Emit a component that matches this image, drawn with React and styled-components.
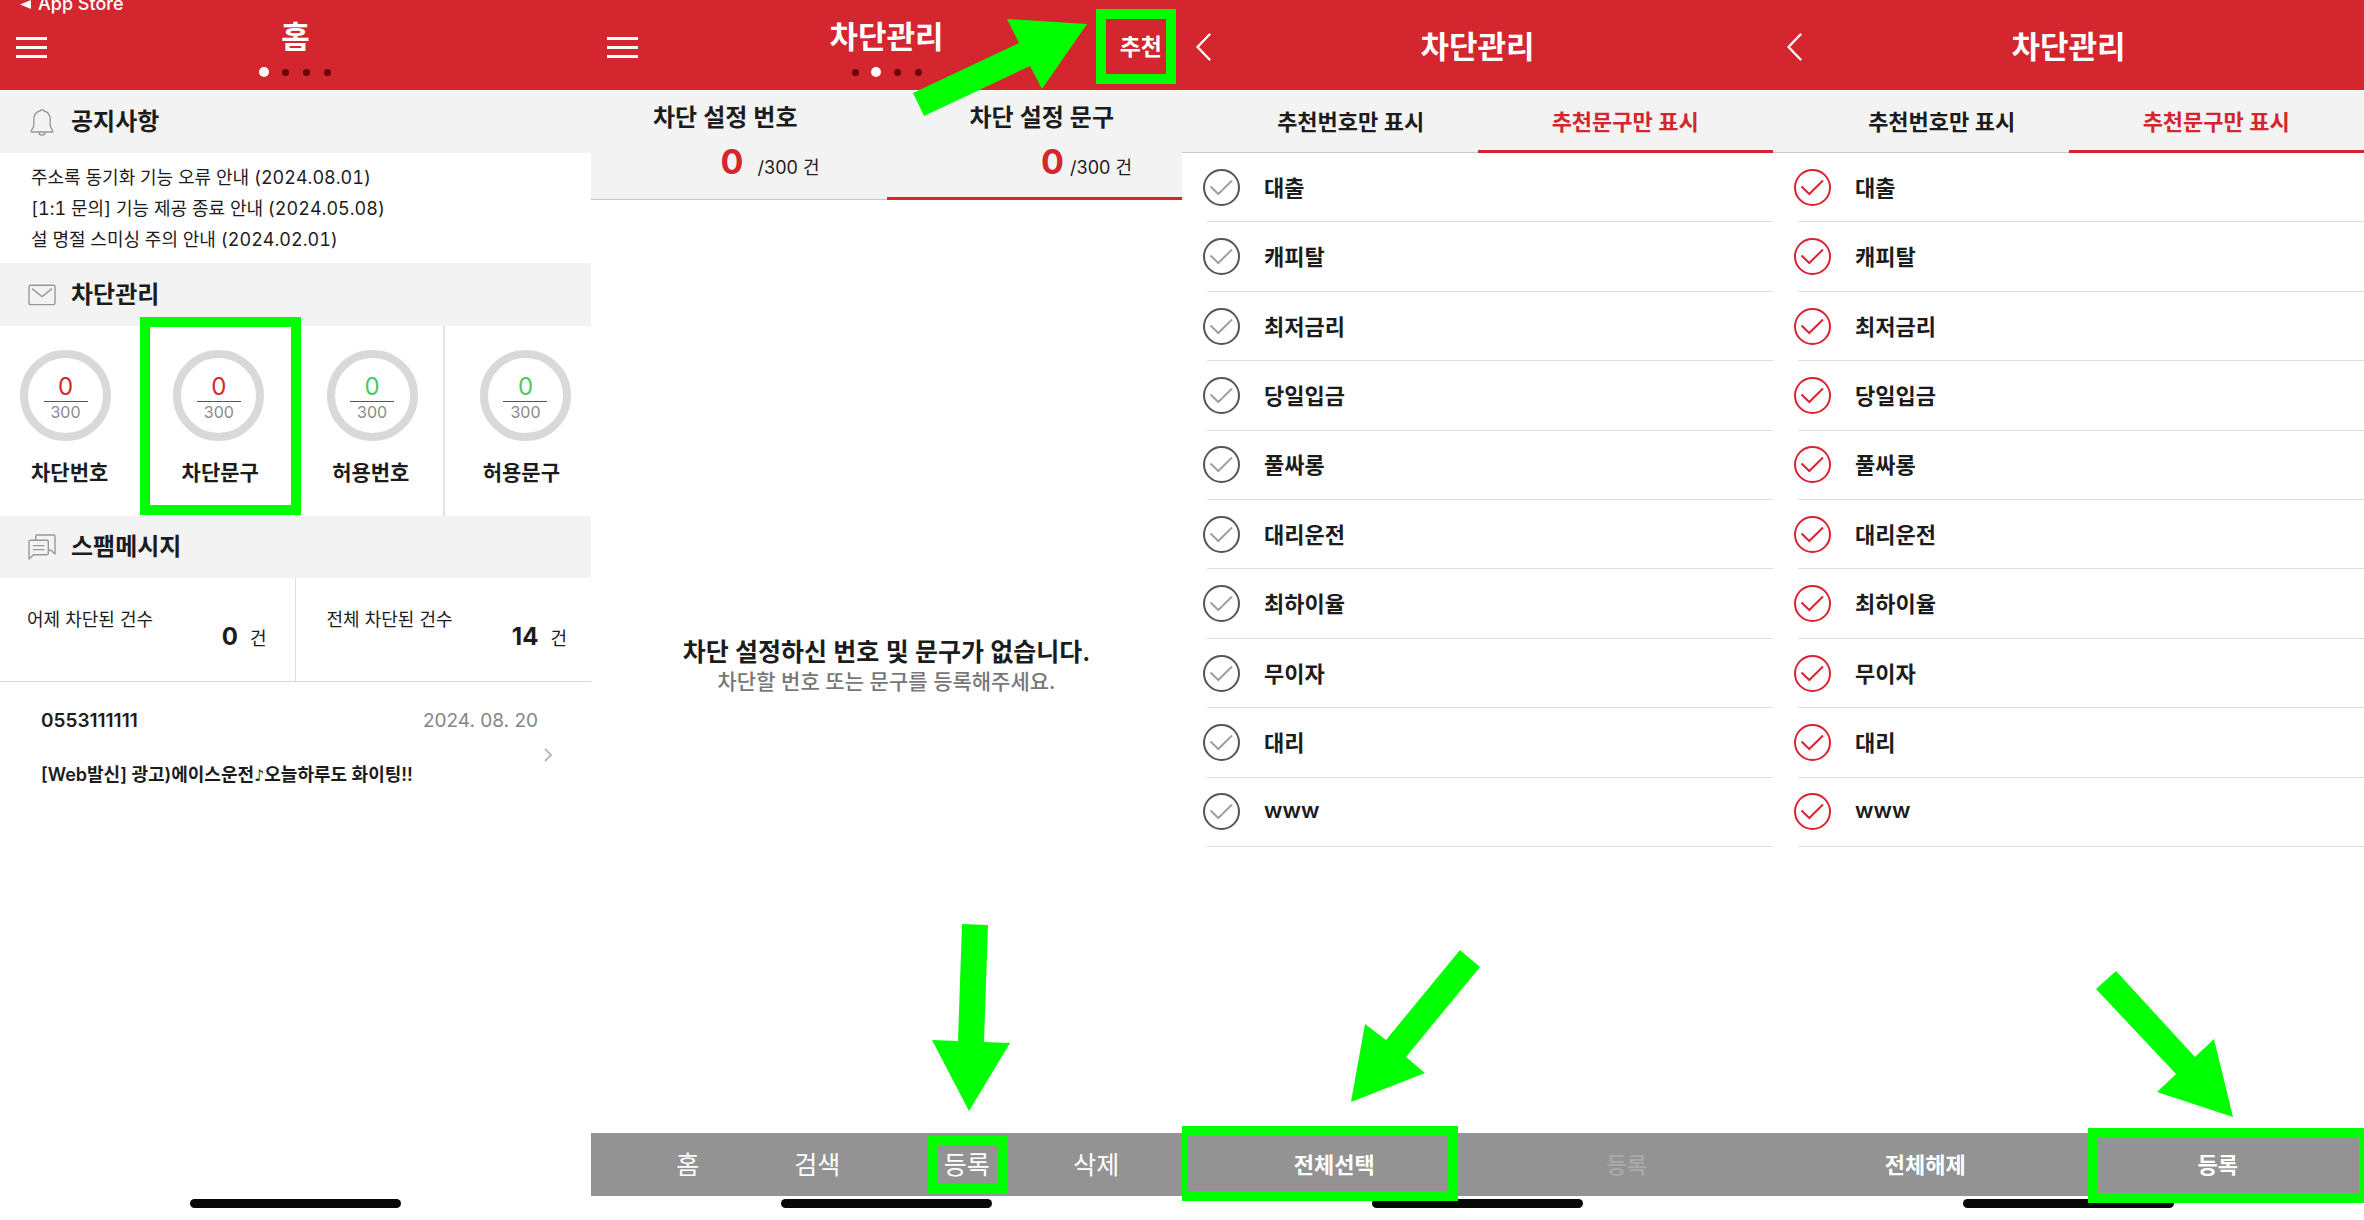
import React, { useState } from 'react';
import styled, { createGlobalStyle } from 'styled-components';

const GlobalStyle = createGlobalStyle`
    * {
        box-sizing: border-box;
    }

    body {
        margin: 0;
        background-color: #fff;
        color: #1c1c1c;
        font-family: Inter, "Noto Sans CJK KR", sans-serif;
        font-size: 18px;
    }

    h1, h2, p, ul {
        margin: 0;
        padding: 0;
    }

    ul {
        list-style: none;
    }

    a {
        color: inherit;
        text-decoration: none;
    }

    button {
        padding: 0;
        border: none;
        background: none;
        color: inherit;
        font: inherit;
        cursor: pointer;
    }
`;

// Screens
const Screens = styled.main`
    display: grid;
    grid-template-columns: repeat(4, 1fr);
    min-height: 100vh;
`;

const Screen = styled.section`
    position: relative;
    display: flex;
    flex-direction: column;
    min-width: 0;
    overflow: hidden;
`;

const Body = styled.div`
    flex: 1;
`;

// Header
const HeaderContainer = styled.header`
    display: flex;
    flex-direction: column;
    height: 91px;
    background-color: #d3262f;
    border-bottom: 1px solid #fafafa;
    color: #fff;
`;

const StatusBar = styled.div`
    display: flex;
    align-items: flex-end;
    gap: 7px;
    height: 14px;
    padding-left: 20px;
    overflow: hidden;
    font-weight: 500;
    line-height: 20px;

    svg {
        margin-bottom: 5px;
    }
`;

const TitleBar = styled.div`
    display: grid;
    grid-template-columns: 1fr auto 1fr;
    align-items: center;
    height: 66px;
    padding: 0 ${({ $back }) => ($back ? 14 : 16)}px;
`;

const Title = styled.h1`
    font-size: 31px;
    font-weight: 600;
    line-height: 40px;
    text-align: center;
`;

const Dots = styled.div`
    display: flex;
    justify-content: center;
    margin-top: 10px;
`;

const Dot = styled.span`
    display: flex;
    align-items: center;
    justify-content: center;
    width: 21px;
    height: 10px;

    &::before {
        content: "";
        width: ${({ $active }) => ($active ? 10 : 7)}px;
        height: ${({ $active }) => ($active ? 10 : 7)}px;
        border-radius: 50%;
        background-color: ${({ $active }) => ($active ? '#fff' : '#6b0508')};
    }
`;

const IconButton = styled.button`
    justify-self: start;

    svg {
        display: block;
    }
`;

const HeaderAction = styled.button`
    justify-self: end;
    padding: 0 4px 4px 0;
    font-size: 23px;
    font-weight: 600;
`;

// Home
const SectionTitle = styled.h2`
    display: flex;
    align-items: center;
    gap: 15px;
    height: ${({ $height }) => $height}px;
    padding-left: 28px;
    background-color: #f3f3f3;
    font-size: 24px;
    font-weight: 600;
    line-height: 32px;

    svg {
        width: 28px;
        flex: none;
    }
`;

const NoticeList = styled.ul`
    padding: 9px 31px 8px;
    font-variant-numeric: tabular-nums;
    line-height: 31px;
`;

const Gauges = styled.div`
    height: 190px;
    padding-top: 24px;
    background: linear-gradient(
        to right,
        transparent 25%, #e2e2e2 25%, #e2e2e2 calc(25% + 2px), transparent calc(25% + 2px),
        transparent 50%, #e2e2e2 50%, #e2e2e2 calc(50% + 2px), transparent calc(50% + 2px),
        transparent 75%, #e2e2e2 75%, #e2e2e2 calc(75% + 2px), transparent calc(75% + 2px)
    );
`;

const GaugeRow = styled.div`
    display: flex;
    justify-content: space-between;
    padding: 0 20px;
`;

const Gauge = styled.div`
    display: flex;
    flex-direction: column;
    align-items: center;
    width: 91px;
    height: 91px;
    padding-top: 15px;
    border: 8px solid #d9d9d9;
    border-radius: 50%;
    background-color: #fff;
`;

const GaugeValue = styled.span`
    width: 44px;
    height: 29px;
    border-bottom: 1px solid #555;
    color: ${({ $color }) => $color};
    font-size: 24px;
    line-height: 28px;
    text-align: center;
`;

const GaugeMax = styled.span`
    color: #8a8a8a;
    font-size: 16px;
    line-height: 20px;
`;

const GaugeLabels = styled.nav`
    display: flex;
    justify-content: space-between;
    margin-top: 16px;
    padding: 0 31px;
    font-size: 21px;
    font-weight: 600;
    line-height: 32px;
`;

const Counts = styled.div`
    display: grid;
    grid-template-columns: 1fr 1fr;
    height: 104px;
    border-bottom: 1px solid #d6d6d6;
`;

const CountCard = styled.div`
    display: flex;
    align-items: flex-start;
    justify-content: space-between;
    padding: 29px 24px 0 31px;

    &:first-child {
        padding: 29px 28px 0 27px;
        border-right: 1px solid #dedede;
    }
`;

const CountLabel = styled.span`
    line-height: 26px;
`;

const CountValue = styled.span`
    display: flex;
    align-items: baseline;
    gap: 12px;
    padding-top: 14px;
    line-height: 32px;

    strong {
        font-size: 24px;
        font-weight: 700;
    }
`;

const Message = styled.a`
    display: flex;
    gap: 6px;
    padding: 25px 39px 24px 41px;
    font-weight: 600;
    line-height: 28px;

    > svg {
        margin-top: 41px;
    }
`;

const MessageText = styled.div`
    flex: 1;
`;

const MessageTop = styled.div`
    display: flex;
    justify-content: space-between;
    margin-bottom: 26px;
    font-size: 19px;
`;

const MessageDate = styled.time`
    color: #858585;
    font-weight: 400;
`;

const NoteMark = styled.span`
    font-family: "DejaVu Sans", sans-serif;
    font-size: 16px;
    line-height: 20px;
`;

// Tabs
const Tabs = styled.div`
    display: grid;
    grid-template-columns: 1fr 1fr;
    height: ${({ $tall }) => ($tall ? 109 : 62)}px;
    background-color: #f3f3f3;
    border-bottom: 1px solid #c8c8c8;
`;

const Tab = styled.button`
    height: ${({ $tall }) => ($tall ? 109 : 62)}px;
    padding-bottom: 2px;
    border-bottom: 3px solid ${({ $active }) => ($active ? '#d3262f' : 'transparent')};
    color: ${({ $active }) => ($active ? '#d3262f' : '#1c1c1c')};
    font-size: 22px;
    font-weight: 600;

    &:first-child {
        padding-left: 42px;
    }
`;

const CountTab = styled(Tab)`
    display: flex;
    flex-direction: column;
    align-items: flex-end;
    padding-top: 11px;
    padding-right: ${({ $right }) => $right}px;
    color: #1c1c1c;
    font-size: 24px;
    line-height: 32px;
`;

const CountTabTitle = styled.span`
    padding-right: ${({ $right }) => $right}px;
`;

const CountTabValue = styled.span`
    display: flex;
    align-items: baseline;
    gap: ${({ $gap }) => $gap}px;
    margin-top: 6px;
    font-size: 18px;
    font-weight: 400;
    line-height: 44px;

    strong {
        color: #d3262f;
        font-size: 34px;
        font-weight: 700;
    }
`;

const Empty = styled(Body)`
    display: flex;
    flex-direction: column;
    align-items: center;
    justify-content: center;
    padding-bottom: 2px;
`;

const EmptyTitle = styled.p`
    font-size: 25px;
    font-weight: 600;
    line-height: 32px;
`;

const EmptyText = styled.p`
    color: #777;
    font-size: 21px;
    font-weight: 500;
    line-height: 28px;
`;

// Phrase list
const PhraseList = styled.ul`
    display: flex;
    flex-direction: column;
    height: 694px;
`;

const PhraseItem = styled.li`
    flex: 1;
    margin-left: 25px;
    border-bottom: 1px solid #dedede;
`;

const PhraseLabel = styled.label`
    display: grid;
    grid-template-columns: 37px 1fr;
    align-items: center;
    column-gap: 24px;
    height: 100%;
    margin-left: -4px;
    font-size: 22px;
    font-weight: 600;
    cursor: pointer;

    input, svg {
        grid-area: 1 / 1;
    }

    span {
        padding-bottom: 3px;
    }

    svg {
        pointer-events: none;
        color: #a0a0a0;
    }

    input:checked + svg {
        color: #dc2233;
    }
`;

const Checkbox = styled.input`
    appearance: none;
    width: 37px;
    height: 37px;
    margin: 0;
    border: 2px solid #555;
    border-radius: 50%;

    &:checked {
        border-color: #dc2233;
    }
`;

// Bottom bar
const BottomBar = styled.nav`
    display: flex;
    height: 63px;
    background-color: #939393;
    color: #fff;

    button {
        flex: 1;
        padding-bottom: 3px;
    }
`;

const MenuBar = styled(BottomBar)`
    gap: 20px;
    padding: 0 21px 0 32px;
    font-size: 25px;
`;

const MenuGroup = styled.div`
    display: flex;
    flex: 1;
`;

const SelectBar = styled(BottomBar)`
    padding-left: 6px;
    font-size: 22px;
    font-weight: 600;
`;

const SelectButton = styled.button`
    &:disabled {
        color: #aaa;
        font-weight: 500;
    }
`;

const HomeArea = styled.div`
    display: flex;
    justify-content: center;
    height: 24px;
    padding-top: 3px;

    &::before {
        content: "";
        width: 211px;
        height: 9px;
        border-radius: 5px;
        background-color: #080808;
    }
`;

// Guide marks that lie over the screens
const Highlight = styled.div`
    position: absolute;
    left: ${({ $left }) => $left}px;
    top: ${({ $top }) => $top}px;
    width: ${({ $width }) => $width}px;
    height: ${({ $height }) => $height}px;
    border: 10px solid #00ff00;
    pointer-events: none;
`;

const ArrowMark = styled.svg`
    position: absolute;
    left: 0;
    top: 0;
    width: 591px;
    height: 1220px;
    fill: #00ff00;
    pointer-events: none;
`;

const Arrow = ({ points }) => (
    <ArrowMark viewBox="0 0 591 1220" aria-hidden="true">
        <polygon points={points} />
    </ArrowMark>
);

const MenuIcon = () => (
    <svg width="31" height="21" viewBox="0 0 31 21" stroke="#fff" strokeWidth="3">
        <path d="M0 1.5H31M0 10.5H31M0 19.5H31" />
    </svg>
);

const BackIcon = () => (
    <svg width="15" height="28" viewBox="0 0 15 28" fill="none" stroke="#fff" strokeWidth="2.4" strokeLinecap="round" strokeLinejoin="round">
        <path d="M13.5 1.5L1.5 14L13.5 26.5" />
    </svg>
);

const BellIcon = () => (
    <svg height="28" viewBox="0 0 28 28" fill="none" stroke="#999" strokeWidth="1.4" strokeLinejoin="round">
        <path d="M12.4 2.8C12.5 1.2 15.5 1.2 15.6 2.8C20 3.8 22.2 7.3 22.2 11.5V17.5C22.2 20 24.8 21 24.8 24H3.2C3.2 21 5.8 20 5.8 17.5V11.5C5.8 7.3 8 3.8 12.4 2.8Z" />
        <path d="M11 24C11 28.2 17 28.2 17 24" />
    </svg>
);

const MailIcon = () => (
    <svg height="22" viewBox="0 0 28 22" fill="none" stroke="#999" strokeWidth="1.4" strokeLinejoin="round">
        <rect x="1" y="1.2" width="26" height="19.4" rx="1.5" />
        <path d="M4 4.6L14 12.6L24 4.6" />
    </svg>
);

const ChatIcon = () => (
    <svg height="26" viewBox="0 0 28 26" fill="none" stroke="#999" strokeWidth="1.4" strokeLinejoin="round">
        <path d="M1 25V7.5Q1 6.2 2.3 6.2H19Q20.3 6.2 20.3 7.5V19.5Q20.3 20.8 19 20.8H5.6Z" />
        <path d="M7.8 6V2.4Q7.8 1 9.2 1H25.6Q27 1 27 2.4V20L23 16.2H20.4" />
        <path d="M4.8 11.6H16.4M4.8 15.6H16.4" />
    </svg>
);

const CheckIcon = () => (
    <svg width="37" height="37" viewBox="0 0 37 37" fill="none" stroke="currentColor" strokeWidth="2">
        <path d="M7.5 17.5L15.3 25L29 11.5" />
    </svg>
);

const notices = [
    '주소록 동기화 기능 오류 안내 (2024.08.01)',
    '[1:1 문의] 기능 제공 종료 안내 (2024.05.08)',
    '설 명절 스미싱 주의 안내 (2024.02.01)',
];

const gauges = [
    { label: '차단번호', color: '#d3262f' },
    { label: '차단문구', color: '#d3262f' },
    { label: '허용번호', color: '#4cc764' },
    { label: '허용문구', color: '#4cc764' },
];

const phrases = ['대출', '캐피탈', '최저금리', '당일입금', '풀싸롱', '대리운전', '최하이율', '무이자', '대리', 'www'];

const Header = ({ title, page, back, action, status }) => (
    <HeaderContainer>
        <StatusBar>
            {status && (
                <>
                    <svg width="11" height="9" viewBox="0 0 11 9" fill="#fff"><path d="M0 4.5L11 0V9Z" /></svg>
                    <span>{status}</span>
                </>
            )}
        </StatusBar>
        <TitleBar $back={back}>
            <IconButton aria-label={back ? '뒤로' : '메뉴'}>
                {back ? <BackIcon /> : <MenuIcon />}
            </IconButton>
            <div>
                <Title>{title}</Title>
                {page !== undefined && (
                    <Dots>
                        {[0, 1, 2, 3].map((n) => <Dot key={n} $active={n === page} />)}
                    </Dots>
                )}
            </div>
            {action && <HeaderAction>{action}</HeaderAction>}
        </TitleBar>
    </HeaderContainer>
);

const HomeScreen = () => (
    <Screen>
        <Header title="홈" page={0} status="App Store" />
        <Body>
            <SectionTitle $height={62}><BellIcon />공지사항</SectionTitle>
            <NoticeList>
                {notices.map((notice) => (
                    <li key={notice}><a href="#notice">{notice}</a></li>
                ))}
            </NoticeList>
            <SectionTitle $height={63}><MailIcon />차단관리</SectionTitle>
            <Gauges>
                <GaugeRow>
                    {gauges.map(({ label, color }) => (
                        <Gauge key={label}>
                            <GaugeValue $color={color}>0</GaugeValue>
                            <GaugeMax>300</GaugeMax>
                        </Gauge>
                    ))}
                </GaugeRow>
                <GaugeLabels>
                    {gauges.map(({ label }) => <a key={label} href="#block">{label}</a>)}
                </GaugeLabels>
            </Gauges>
            <SectionTitle $height={62}><ChatIcon />스팸메시지</SectionTitle>
            <Counts>
                <CountCard>
                    <CountLabel>어제 차단된 건수</CountLabel>
                    <CountValue><strong>0</strong>건</CountValue>
                </CountCard>
                <CountCard>
                    <CountLabel>전체 차단된 건수</CountLabel>
                    <CountValue><strong>14</strong>건</CountValue>
                </CountCard>
            </Counts>
            <Message href="#message">
                <MessageText>
                    <MessageTop>
                        <span>0553111111</span>
                        <MessageDate>2024. 08. 20</MessageDate>
                    </MessageTop>
                    <p>[Web발신] 광고)에이스운전<NoteMark>♪</NoteMark>오늘하루도 화이팅!!</p>
                </MessageText>
                <svg width="8" height="14" viewBox="0 0 8 14" fill="none" stroke="#bbb" strokeWidth="2"><path d="M1 1L7 7L1 13" /></svg>
            </Message>
        </Body>
        <HomeArea />
        <Highlight $left={140} $top={317} $width={161} $height={198} />
    </Screen>
);

const BlockScreen = () => (
    <Screen>
        <Header title="차단관리" page={1} action="추천" />
        <Tabs $tall>
            <CountTab $tall $right={67}>
                <CountTabTitle $right={22}>차단 설정 번호</CountTabTitle>
                <CountTabValue $gap={14}><strong>0</strong>/300 건</CountTabValue>
            </CountTab>
            <CountTab $tall $active $right={50}>
                <CountTabTitle $right={18}>차단 설정 문구</CountTabTitle>
                <CountTabValue $gap={6}><strong>0</strong>/300 건</CountTabValue>
            </CountTab>
        </Tabs>
        <Empty>
            <EmptyTitle>차단 설정하신 번호 및 문구가 없습니다.</EmptyTitle>
            <EmptyText>차단할 번호 또는 문구를 등록해주세요.</EmptyText>
        </Empty>
        <MenuBar>
            <MenuGroup>
                <button>홈</button>
                <button>검색</button>
            </MenuGroup>
            <MenuGroup>
                <button>등록</button>
                <button>삭제</button>
            </MenuGroup>
        </MenuBar>
        <HomeArea />
        <Highlight $left={505} $top={9} $width={80} $height={75} />
        <Highlight $left={337} $top={1135} $width={80} $height={59} />
        <Arrow points="416,19 496,24 451,89 439,66 333,116 322,93 428,43" />
        <Arrow points="371,924 397,925 393,1042 419,1043 378,1111 341,1040 367,1041" />
    </Screen>
);

const RecommendScreen = ({ allSelected, children }) => {
    const [selected, setSelected] = useState(allSelected ? phrases : []);

    const toggle = (phrase) => {
        setSelected(selected.includes(phrase) ? selected.filter((p) => p !== phrase) : [...selected, phrase]);
    };

    const isAll = selected.length === phrases.length;

    return (
        <Screen>
            <Header title="차단관리" back />
            <Tabs>
                <Tab>추천번호만 표시</Tab>
                <Tab $active>추천문구만 표시</Tab>
            </Tabs>
            <Body>
                <PhraseList>
                    {phrases.map((phrase) => (
                        <PhraseItem key={phrase}>
                            <PhraseLabel>
                                <Checkbox type="checkbox" checked={selected.includes(phrase)} onChange={() => toggle(phrase)} />
                                <CheckIcon />
                                <span>{phrase}</span>
                            </PhraseLabel>
                        </PhraseItem>
                    ))}
                </PhraseList>
            </Body>
            <SelectBar>
                <SelectButton onClick={() => setSelected(isAll ? [] : phrases)}>
                    {isAll ? '전체해제' : '전체선택'}
                </SelectButton>
                <SelectButton disabled={selected.length === 0}>등록</SelectButton>
            </SelectBar>
            <HomeArea />
            {children}
        </Screen>
    );
};

const App = () => {
    return (
        <>
            <GlobalStyle />
            <Screens>
                <HomeScreen />
                <BlockScreen />
                <RecommendScreen>
                    <Highlight $left={-5} $top={1126} $width={281} $height={75} />
                    <Arrow points="278,950 298,967 224,1057 243,1073 169,1102 183,1024 204,1040" />
                </RecommendScreen>
                <RecommendScreen allSelected>
                    <Highlight $left={315} $top={1128} $width={281} $height={75} />
                    <Arrow points="343,971 422,1057 441,1039 460,1117 384,1092 403,1074 323,989" />
                </RecommendScreen>
            </Screens>
        </>
    );
}

export default App;
